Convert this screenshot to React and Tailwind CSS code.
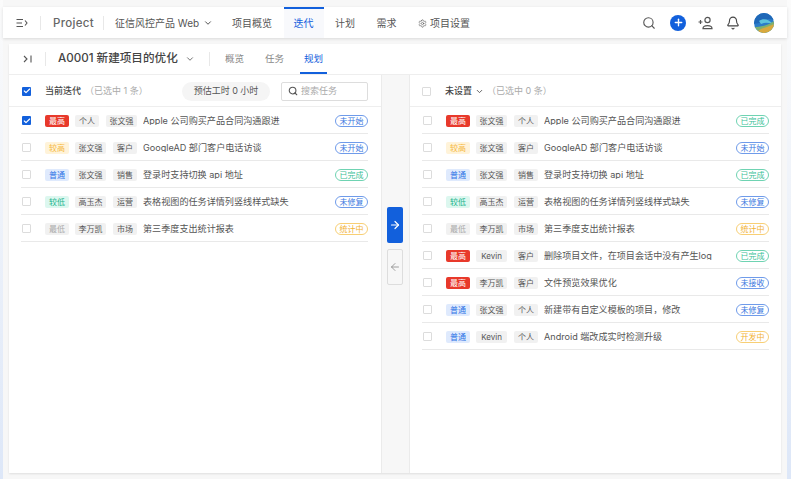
import React from 'react';
import { Search, Bell, ChevronDown, Settings, Check, Plus, ArrowRight, ArrowLeft } from 'lucide-react';

const P = {
  最高: 'bg-[#e8392b] text-white',
  较高: 'bg-[#fff3d9] text-[#f5b942]',
  普通: 'bg-[#dfeafd] text-[#2f74e6]',
  较低: 'bg-[#dcf7ef] text-[#22b58d]',
  最低: 'bg-[#f1f1f1] text-[#aaaaaa]',
};
const S = {
  blue: 'border-[#6f9bea] text-[#3b78e0]',
  green: 'border-[#6fd3b2] text-[#3cbf97]',
  orange: 'border-[#f8cf75] text-[#f2b233]',
};

const left = [
  ['最高', '个人', '张文强', 'Apple 公司购买产品合同沟通跟进', '未开始', 'blue', true],
  ['较高', '张文强', '客户', 'GoogleAD 部门客户电话访谈', '未开始', 'blue'],
  ['普通', '张文强', '销售', '登录时支持切换 api 地址', '已完成', 'green'],
  ['较低', '高玉杰', '运营', '表格视图的任务详情列竖线样式缺失', '未修复', 'blue'],
  ['最低', '李万凯', '市场', '第三季度支出统计报表', '统计中', 'orange'],
];
const right = [
  ['最高', '张文强', '个人', 'Apple 公司购买产品合同沟通跟进', '已完成', 'green'],
  ['较高', '张文强', '客户', 'GoogleAD 部门客户电话访谈', '未开始', 'blue'],
  ['普通', '张文强', '销售', '登录时支持切换 api 地址', '已完成', 'green'],
  ['较低', '高玉杰', '运营', '表格视图的任务详情列竖线样式缺失', '未修复', 'blue'],
  ['最低', '李万凯', '市场', '第三季度支出统计报表', '统计中', 'orange'],
  ['最高', 'Kevin', '客户', '删除项目文件，在项目会话中没有产生log', '已完成', 'green'],
  ['最高', '李万凯', '客户', '文件预览效果优化', '未接收', 'blue'],
  ['普通', '张文强', '个人', '新建带有自定义模板的项目，修改', '未修复', 'blue'],
  ['普通', 'Kevin', '个人', 'Android 端改成实时检测升级', '开发中', 'orange'],
];

function Box({ checked }) {
  return checked ? (
    <span className="flex h-[9px] w-[9px] shrink-0 items-center justify-center rounded-[1px] bg-[#1260dc]">
      <Check size={8} strokeWidth={3.5} color="#fff" />
    </span>
  ) : (
    <span className="h-[9px] w-[9px] shrink-0 rounded-[1px] border border-[#dcdcdc] bg-white" />
  );
}

function Tag({ w, children }) {
  return (
    <span className={`flex h-[12px] shrink-0 items-center justify-center rounded-[2px] bg-[#f1f1f1] text-[8px] leading-none text-[#555555] ${w}`}>
      {children}
    </span>
  );
}

function Row({ r }) {
  const wide = (t) => (t.length > 2 ? 'w-[31px]' : 'w-[24px]');
  return (
    <div className="flex h-[27px] items-center border-b border-[#e9e9e9] pl-[1px] pt-[1px]">
      <Box checked={r[6]} />
      <span className={`ml-[14px] flex h-[12px] w-[24px] shrink-0 items-center justify-center rounded-[2px] text-[8px] leading-none ${P[r[0]]}`}>{r[0]}</span>
      <span className="ml-[6px]"><Tag w={wide(r[1])}>{r[1]}</Tag></span>
      <span className="ml-[7px]"><Tag w={wide(r[2])}>{r[2]}</Tag></span>
      <span className="ml-[6px] min-w-0 flex-1 truncate text-[9.1px] leading-none text-[#555555]">{r[3]}</span>
      <span className={`flex h-[12px] w-[33px] shrink-0 items-center justify-center rounded-full border text-[8px] leading-none ${S[r[5]]}`}>{r[4]}</span>
    </div>
  );
}

function Divider({ h = 'h-[14px]' }) {
  return <span className={`block w-px shrink-0 bg-[#e8e8e8] ${h}`} />;
}

function NavItem({ children, active }) {
  return (
    <div className={`flex h-full items-center px-[10px] text-[10px] ${active ? 'border-t-2 border-[#1260dc] bg-[#f8f9fc] text-[#1260dc]' : 'pt-[2px] text-[#555555]'}`}>
      {children}
    </div>
  );
}

export default function App() {
  return (
    <div
      className="h-[479px] w-[791px] overflow-hidden bg-gradient-to-b from-[#fbfbfb] to-[#dde7f8] pl-[3px] pr-[4px]"
      style={{ fontFamily: 'Inter, "Noto Sans CJK SC", sans-serif' }}
    >
      <div className="flex h-full flex-col bg-[#f7f7f7] pt-[7px]">
        {/* top bar */}
        <div className="flex h-[31px] shrink-0 items-center bg-white shadow-[0_1px_3px_rgba(0,0,0,0.12)]">
          <svg className="ml-[13px] shrink-0" width="12" height="10" viewBox="0 0 12 10" fill="none" stroke="#555" strokeWidth="1.1">
            <path d="M0.5 1.5H7M0.5 5H6M0.5 8.5H7M9 2.5L11 5L9 7.5" />
          </svg>
          <span className="ml-[12px]"><Divider /></span>
          <span className="ml-[12px] w-[40px] shrink-0 pt-[2px] text-[11.5px] font-medium tracking-[0.3px] text-[#666666]">Project</span>
          <span className="ml-[10px]"><Divider /></span>
          <div className="ml-[11px] flex w-[99px] shrink-0 items-center gap-[4px] pt-[1px] text-[10px] text-[#555555]">
            <span className="whitespace-nowrap">征信风控产品 Web</span>
            <ChevronDown size={10} strokeWidth={2.4} />
          </div>
          <div className="ml-[8px] flex h-full items-center gap-[1.5px]">
            <NavItem>项目概览</NavItem>
            <NavItem active>迭代</NavItem>
            <NavItem>计划</NavItem>
            <NavItem>需求</NavItem>
            <NavItem>
              <span className="flex items-center gap-[3px] whitespace-nowrap">
                <Settings size={9} strokeWidth={1.6} />
                项目设置
              </span>
            </NavItem>
          </div>
          <div className="ml-auto flex items-center pr-[13px]">
            <Search size={14} strokeWidth={1.9} color="#555" />
            <span className="ml-[14px] flex h-[16px] w-[16px] items-center justify-center rounded-full bg-[#1260dc]">
              <Plus size={11} strokeWidth={3} color="#fff" />
            </span>
            <svg className="ml-[12px]" width="15" height="14" viewBox="0 0 15 14" fill="none" stroke="#555" strokeWidth="1.2">
              <path d="M0.5 6H4.5M2.5 4V8" />
              <circle cx="9.5" cy="4" r="2.6" />
              <path d="M5 12.6C5 10.6 6.5 9.6 9.5 9.6C12.5 9.6 14 10.6 14 12.6Z" />
            </svg>
            <span className="ml-[13px]"><Bell size={14} strokeWidth={1.9} color="#444" /></span>
            <svg className="ml-[14px]" width="20" height="20" viewBox="0 0 20 20">
              <defs>
                <clipPath id="av"><circle cx="10" cy="10" r="10" /></clipPath>
              </defs>
              <g clipPath="url(#av)">
                <rect width="20" height="20" fill="#2b7cc9" />
                <path d="M0 0H20V7C15 5 10 6 7 9C4 11 2 10 0 11Z" fill="#1f68b8" />
                <path d="M5 8C9 5 14 6 18 10C14 10 10 9 7 11Z" fill="#5cc3dc" />
                <path d="M0 14C6 14 13 13 20 8V20H0Z" fill="#7fb070" />
                <path d="M3 20C5 15 12 15 20 11V20Z" fill="#d8a93e" />
              </g>
            </svg>
          </div>
        </div>

        {/* card */}
        <div className="mx-[6px] mt-[6px] flex h-[429px] flex-col bg-white shadow-[0_1px_2px_rgba(0,0,0,0.1)]">
          <div className="flex h-[31px] shrink-0 items-center border-b border-[#eeeeee]">
            <svg className="ml-[14px] shrink-0" width="9" height="8" viewBox="0 0 9 8" fill="none" stroke="#555" strokeWidth="1.1">
              <path d="M1 1L4 4L1 7M8 0.5V7.5" />
            </svg>
            <span className="ml-[13px]"><Divider /></span>
            <span className="ml-[12px] w-[120px] shrink-0 whitespace-nowrap text-[11.6px] font-medium text-[#444444]">A0001 新建项目的优化</span>
            <ChevronDown className="ml-[7px] shrink-0" size={10} strokeWidth={2.2} color="#666" />
            <span className="ml-[14px]"><Divider /></span>
            <div className="ml-[11px] flex h-full items-center text-[9.5px] text-[#888888]">
              <span className="flex h-full items-center px-[4px]">概览</span>
              <span className="ml-[13px] flex h-full items-center px-[4px]">任务</span>
              <span className="ml-[12px] flex h-full items-center border-b-2 border-[#1260dc] px-[4px] pt-[2px] text-[#1260dc]">规划</span>
            </div>
          </div>

          <div className="flex min-h-0 flex-1">
            {/* left panel */}
            <div className="w-[372px] shrink-0">
              <div className="flex h-[32px] items-center border-b border-[#eeeeee] pl-[13px] pr-[13px] pt-[1px]">
                <Box checked />
                <span className="ml-[14px] text-[9px] font-medium text-[#444444]">当前迭代</span>
                <span className="ml-[4px] whitespace-nowrap text-[9px] text-[#aaaaaa]">（已选中 1 条）</span>
                <span className="ml-auto flex h-[19px] w-[88px] items-center justify-center rounded-full bg-[#f5f5f5] text-[9px] text-[#555555]">预估工时 0 小时</span>
                <div className="ml-[11px] flex h-[19px] w-[87px] items-center gap-[3px] rounded-[2px] border border-[#dddddd] pl-[6px]">
                  <Search size={10} strokeWidth={2.6} color="#555" />
                  <span className="text-[9px] text-[#aaaaaa]">搜索任务</span>
                </div>
              </div>
              <div className="pl-[12px] pr-[13px]">
                {left.map((r) => <Row key={r[3]} r={r} />)}
              </div>
            </div>

            {/* middle */}
            <div className="flex w-[29px] shrink-0 flex-col items-center gap-[6px] border-x border-[#ebebeb] bg-[#f7f7f7] pr-[1px] pt-[132px]">
              <button className="flex h-[36px] w-[16px] items-center justify-center rounded-[2px] bg-[#1260dc]">
                <ArrowRight size={12} strokeWidth={2.4} color="#fff" />
              </button>
              <button className="flex h-[36px] w-[16px] items-center justify-center rounded-[2px] border border-[#dddddd] bg-[#f7f7f7]">
                <ArrowLeft size={12} strokeWidth={1.6} color="#888" />
              </button>
            </div>

            {/* right panel */}
            <div className="min-w-0 flex-1">
              <div className="flex h-[32px] items-center border-b border-[#eeeeee] pl-[12px] pt-[1px]">
                <Box />
                <span className="ml-[14px] text-[9px] font-medium text-[#444444]">未设置</span>
                <ChevronDown className="ml-[3px]" size={9} strokeWidth={2.4} color="#555" />
                <span className="ml-[3px] whitespace-nowrap text-[9px] text-[#aaaaaa]">（已选中 0 条）</span>
              </div>
              <div className="pl-[12px] pr-[12px]">
                {right.map((r) => <Row key={r[3]} r={r} />)}
              </div>
            </div>
          </div>
        </div>
      </div>
    </div>
  );
}
